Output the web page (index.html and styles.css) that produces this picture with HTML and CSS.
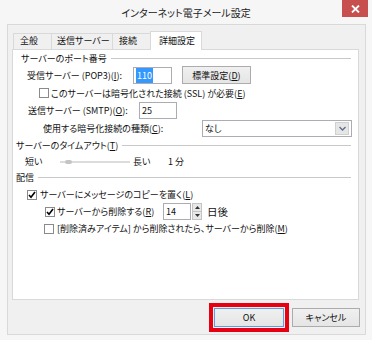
FILE: index.html
```html
<!DOCTYPE html>
<html lang="ja">
<head>
    <meta charset="UTF-8">
    <title>インターネット電子メール設定</title>
    <link rel="stylesheet" href="styles.css">
</head>
<body>

    <div class="window">

        <!-- Title bar -->
        <div class="titlebar">
            <span></span>
            <div class="title">インターネット電子メール設定</div>
            <div class="close">
                <svg width="9" height="8" viewBox="0 0 9 8"><path d="M1 0.5 L8 7.5 M8 0.5 L1 7.5" stroke="#fff" stroke-width="1.8"/></svg>
            </div>
        </div>

        <div class="client">

            <!-- Tabs -->
            <div class="tabs">
                <div class="tab tab-1">全般</div>
                <div class="tab tab-2">送信サーバー</div>
                <div class="tab tab-3">接続</div>
                <div class="tab active">詳細設定</div>
            </div>

            <div class="panel">

                <div class="legend first"><span>サーバーのポート番号</span><i></i></div>

                <div class="row row-pop">
                    <label class="lbl-pop">受信サーバー (POP3)(<u>I</u>):</label>
                    <div class="textbox tb-pop"><span class="sel">110</span></div>
                    <button class="btn btn-std">標準設定(<u>D</u>)</button>
                </div>

                <div class="row row-ssl">
                    <span class="check"></span>
                    <span class="cb-text">このサーバーは暗号化された接続 (SSL) が必要(<u>E</u>)</span>
                </div>

                <div class="row row-smtp">
                    <label class="lbl-smtp">送信サーバー (SMTP)(<u>O</u>):</label>
                    <div class="textbox tb-smtp">25</div>
                </div>

                <div class="row row-enc">
                    <label class="lbl-enc">使用する暗号化接続の種類(<u>C</u>):</label>
                    <div class="select">
                        <span>なし</span>
                        <span class="drop">
                            <svg width="7" height="5" viewBox="0 0 7 5"><path d="M0.5 1 L3.5 4 L6.5 1" fill="none" stroke="#5a6f8a" stroke-width="1.3"/></svg>
                        </span>
                    </div>
                </div>

                <div class="legend"><span>サーバーのタイムアウト(<u>T</u>)</span><i></i></div>

                <div class="row row-slider">
                    <span class="short">短い</span>
                    <div class="track"><span class="thumb"></span></div>
                    <span class="long">長い</span>
                    <span>1 分</span>
                </div>

                <div class="legend legend-deliv"><span>配信</span><i></i></div>

                <div class="row row-cb1">
                    <span class="check on">
                        <svg width="8" height="8" viewBox="0 0 8 8"><path d="M1 4 L3 6.3 L7 1" fill="none" stroke="#000" stroke-width="1.6"/></svg>
                    </span>
                    <span class="cb-text">サーバーにメッセージのコピーを置く(<u>L</u>)</span>
                </div>

                <div class="row row-cb2">
                    <span class="check on">
                        <svg width="8" height="8" viewBox="0 0 8 8"><path d="M1 4 L3 6.3 L7 1" fill="none" stroke="#000" stroke-width="1.6"/></svg>
                    </span>
                    <span class="cb-text lbl-del">サーバーから削除する(<u>R</u>)</span>
                    <div class="textbox tb-days">14</div>
                    <div class="spin">
                        <span>
                            <svg width="5" height="3" viewBox="0 0 5 3"><path d="M0 3 L2.5 0 L5 3 Z" fill="#333"/></svg>
                        </span>
                        <span>
                            <svg width="5" height="3" viewBox="0 0 5 3"><path d="M0 0 L2.5 3 L5 0 Z" fill="#333"/></svg>
                        </span>
                    </div>
                    <span class="days">日後</span>
                </div>

                <div class="row row-cb3">
                    <span class="check"></span>
                    <span class="cb-text">[削除済みアイテム] から削除されたら、サーバーから削除(<u>M</u>)</span>
                </div>

            </div>

            <!-- Dialog buttons -->
            <div class="buttons">
                <button class="btn btn-ok">OK</button>
                <button class="btn btn-cancel">キャンセル</button>
            </div>

        </div>
    </div>

</body>
</html>
```

FILE: styles.css
```css
/* styles.css */

body {
    margin: 0;
    font-family: "Noto Sans CJK JP", "Liberation Sans", sans-serif;
    font-size: 9px;
    font-feature-settings: "palt";
    color: #111;
    white-space: nowrap;
}

u {
    text-decoration: underline;
}

.window {
    width: 372px;
    height: 340px;
    background-color: #f6f6f6;
    display: flex;
    flex-direction: column;
}

/* Title bar */
.titlebar {
    height: 24px;
    display: grid;
    grid-template-columns: 1fr auto 1fr;
    flex-shrink: 0;
}

.title {
    align-self: center;
    font-size: 10px;
    color: #222;
}

.close {
    justify-self: end;
    width: 26px;
    height: 17px;
    margin-right: 4px;
    background-color: #c7504e;
    display: flex;
    justify-content: center;
    align-items: center;
}

/* Client area */
.client {
    flex: 1;
    margin: 0 6px 5px 7px;
    background-color: #f0f0f0;
    border: 1px solid #d9d9d9;
    padding: 6px 0 0 4px;
    display: flex;
    flex-direction: column;
}

.tabs {
    display: flex;
    align-items: flex-end;
    height: 18px;
    padding-left: 1px;
}

.tab {
    box-sizing: border-box;
    height: 16px;
    line-height: 14px;
    padding-left: 6px;
    border: 1px solid #d9d9d9;
    border-bottom: none;
    background-color: #f0f0f0;
    margin-left: -1px;
    overflow: hidden;
}

.tab:first-child {
    margin-left: 0;
}

.tab-1 { width: 39px; }
.tab-2 { width: 62px; padding-left: 5px; }
.tab-3 { width: 39px; }

.tab.active {
    width: 52px;
    height: 19px;
    line-height: 17px;
    padding-left: 8px;
    background-color: #fff;
    margin-bottom: -1px;
    position: relative;
    z-index: 1;
}

.panel {
    box-sizing: border-box;
    width: 347px;
    height: 251px;
    background-color: #fff;
    border: 1px solid #d9d9d9;
}

/* Group headings with rule */
.legend {
    display: flex;
    align-items: center;
    height: 16px;
    padding-left: 3px;
    margin-right: 7px;
}

.legend.first {
    padding-left: 8px;
}

.legend i {
    flex: 1;
    height: 1px;
    margin-left: 4px;
    background-color: #c8c8c8;
}

.row {
    display: flex;
    align-items: center;
}

label {
    flex-shrink: 0;
}

.textbox {
    box-sizing: border-box;
    height: 17px;
    border: 1px solid #abadb3;
    background-color: #fff;
    padding-left: 2px;
    line-height: 15px;
}

.sel {
    background-color: #3399ff;
    color: #fff;
    padding: 1px 1px;
}

.btn {
    box-sizing: border-box;
    font-family: inherit;
    font-size: 9px;
    font-feature-settings: "palt";
    color: #111;
    background: linear-gradient(#f0f0f0, #e5e5e5);
    border: 1px solid #acacac;
    padding: 0;
}

/* Port rows */
.row-pop {
    height: 18px;
    padding-left: 14px;
}

.lbl-pop {
    width: 106px;
}

.tb-pop {
    width: 39px;
}

.btn-std {
    width: 69px;
    height: 18px;
    margin-left: 10px;
}

.row-ssl {
    height: 18px;
    padding-left: 26px;
}

.check {
    box-sizing: border-box;
    width: 10px;
    height: 10px;
    border: 1px solid #8a8a8a;
    background-color: #fff;
    display: flex;
    justify-content: center;
    align-items: center;
    flex-shrink: 0;
}

.cb-text {
    margin-left: 2px;
}

.row-smtp {
    height: 17px;
    padding-left: 15px;
}

.lbl-smtp {
    width: 111px;
}

.tb-smtp {
    width: 38px;
}

.row-enc {
    height: 18px;
    padding-left: 30px;
}

.lbl-enc {
    width: 159px;
}

.select {
    box-sizing: border-box;
    width: 150px;
    height: 17px;
    border: 1px solid #abadb3;
    background-color: #fff;
    display: flex;
    align-items: center;
    justify-content: space-between;
    padding-left: 2px;
}

.drop {
    width: 12px;
    height: 11px;
    margin-right: 2px;
    background-color: #e6e6e6;
    border: 1px solid #d0d0d0;
    display: flex;
    justify-content: center;
    align-items: center;
}

/* Timeout slider */
.row-slider {
    height: 17px;
    padding-left: 12px;
}

.short {
    width: 35px;
}

.track {
    width: 70px;
    height: 2px;
    background-color: #dcdcdc;
    display: flex;
    align-items: center;
}

.thumb {
    width: 7px;
    height: 4px;
    margin-left: 5px;
    border-radius: 2px;
    background-color: #c4c4c4;
}

.long {
    width: 35px;
    margin-left: 3px;
}

.legend-deliv {
    height: 14px;
}

/* Delivery checkboxes */
.row-cb1 {
    height: 17px;
    padding-left: 14px;
    margin-top: 2px;
}

.row-cb1 .cb-text {
    margin-left: 3px;
}

.row-cb2 {
    height: 17px;
    padding-left: 32px;
}

.lbl-del {
    width: 106px;
}

.tb-days {
    width: 28px;
}

.spin {
    display: flex;
    flex-direction: column;
    width: 10px;
    height: 17px;
    margin-left: 1px;
}

.spin span {
    flex: 1;
    background-color: #e8e8e8;
    border: 1px solid #c4c4c4;
    display: flex;
    justify-content: center;
    align-items: center;
}

.spin span + span {
    border-top: none;
}

.days {
    margin-left: 5px;
    font-size: 10.5px;
}

.row-cb3 {
    height: 17px;
    padding-left: 31px;
}

.row-cb3 .cb-text {
    margin-left: 3px;
}

/* Dialog buttons */
.buttons {
    display: flex;
    justify-content: flex-end;
    gap: 8px;
    width: 348px;
    margin-top: 8px;
}

.btn-ok {
    width: 70px;
    height: 19px;
    border-color: #5a9fe0;
    outline: 4px solid #e60012;
    outline-offset: 1px;
}

.btn-cancel {
    width: 68px;
    height: 19px;
}
```
